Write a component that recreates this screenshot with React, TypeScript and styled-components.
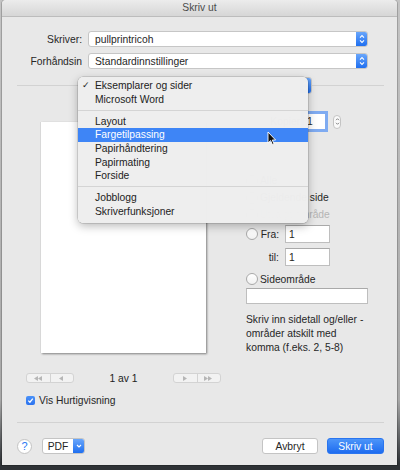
import styled, { createGlobalStyle } from "styled-components";

const GlobalStyle = createGlobalStyle`
  html, body {
    margin: 0;
    padding: 0;
  }
  body {
    width: 400px;
    height: 470px;
    overflow: hidden;
    background: linear-gradient(#c4c4c4, #a8a8a8 85%, #2e3236 98.6%);
    font-family: "Liberation Sans", Arial, sans-serif;
    font-size: 10.3px;
    color: #262626;
  }
`;

const Window = styled.div`
  position: relative;
  margin-left: 2px;
  width: 395px;
  height: 465px;
  background: #e8e8e8;
  border-radius: 4px 4px 0 0;
  box-shadow: 0 0 0 1px rgba(0, 0, 0, 0.18);
  display: flex;
  flex-direction: column;
`;

const TitleBar = styled.div`
  height: 16px;
  line-height: 16px;
  text-align: center;
  color: #4a4a4a;
  background: linear-gradient(#ececec, #d6d6d6);
  border-bottom: 1px solid #bcbcbc;
  border-radius: 4px 4px 0 0;
`;

const Form = styled.div`
  padding-top: 14px;
  display: flex;
  flex-direction: column;
  gap: 6px;
`;

const FieldRow = styled.div`
  display: flex;
  align-items: center;
  gap: 6px;
  height: 16px;
`;

const FieldLabel = styled.span`
  width: 80px;
  text-align: right;
  white-space: nowrap;
`;

const Popup = styled.div<{ $width: number }>`
  box-sizing: border-box;
  width: ${(p) => p.$width}px;
  height: 16px;
  display: flex;
  align-items: center;
  background: #fff;
  border: 1px solid #c6c6c6;
  border-radius: 3px;
  padding-left: 6px;
  overflow: hidden;
  white-space: nowrap;
`;

const PopupArrow = styled.span`
  margin-left: auto;
  width: 11px;
  height: 100%;
  flex: none;
  display: flex;
  align-items: center;
  justify-content: center;
  background: linear-gradient(#69a6fb, #1f6ff0);
`;

const Header = styled.div`
  position: relative;
  margin-top: 8px;
  height: 17px;
  display: flex;
  justify-content: center;

  &::before {
    content: "";
    position: absolute;
    left: 15px;
    right: 13px;
    top: 8px;
    height: 1px;
    background: #d2d2d2;
  }
`;

const HeaderPopup = styled(Popup)`
  position: relative;
  height: 17px;
  margin-left: -2px;
`;

const Main = styled.div`
  display: flex;
  padding-left: 24px;
  gap: 25px;
`;

const LeftColumn = styled.div`
  width: 195px;
  display: flex;
  flex-direction: column;
`;

const Paper = styled.div`
  align-self: center;
  margin-top: 28px;
  width: 165px;
  height: 231px;
  background: #fff;
  box-shadow: -1px 0 0 #d8d8d8, 1px 1px 2px rgba(0, 0, 0, 0.45);
`;

const NavRow = styled.div`
  margin-top: 20px;
  height: 10px;
  display: flex;
  align-items: center;
  justify-content: space-between;
`;

const NavGroup = styled.div`
  box-sizing: border-box;
  width: 48px;
  height: 10px;
  display: flex;
  border: 1px solid #d3d3d3;
  border-radius: 3px;
  background: #f2f2f2;
`;

const NavSegment = styled.span`
  flex: 1;
  display: flex;
  align-items: center;
  justify-content: center;

  & + & {
    border-left: 1px solid #d3d3d3;
  }
`;

const PageCount = styled.span`
  color: #222;
`;

const CheckRow = styled.label`
  margin-top: 13px;
  height: 9px;
  display: flex;
  align-items: center;
  gap: 4px;
`;

const CheckBox = styled.span`
  width: 9px;
  height: 9px;
  border-radius: 2px;
  background: linear-gradient(#4b92f8, #2a72ef);
  display: flex;
  align-items: center;
  justify-content: center;
`;

const RightColumn = styled.div`
  width: 124px;
  display: flex;
  flex-direction: column;
`;

const CopiesRow = styled.div`
  margin-top: 19px;
  height: 17px;
  display: flex;
  align-items: center;
`;

const CopiesLabel = styled.span`
  width: 57px;
  text-align: right;
`;

const TextInput = styled.div<{ $width: number; $height?: number; $focus?: boolean }>`
  box-sizing: border-box;
  width: ${(p) => p.$width}px;
  height: ${(p) => p.$height ?? 18}px;
  background: #fff;
  border: 1px solid #bebebe;
  border-top-color: #a9a9a9;
  padding-left: 3px;
  display: flex;
  align-items: center;
  ${(p) => (p.$focus ? "box-shadow: 0 0 0 2px #7fabf1; border-color: #7fabf1;" : "")}
`;

const Stepper = styled.span`
  margin-left: 7px;
  box-sizing: border-box;
  width: 8px;
  height: 14px;
  border: 1px solid #c4c4c4;
  border-radius: 4px;
  background: #fafafa;
  display: flex;
  align-items: center;
  justify-content: center;
`;

const RadioRow = styled.div<{ $top: number; $height?: number; $dim?: boolean }>`
  margin-top: ${(p) => p.$top}px;
  height: ${(p) => p.$height ?? 17}px;
  display: flex;
  align-items: center;
  white-space: nowrap;
  color: ${(p) => (p.$dim ? "#b5b5b5" : "#262626")};
`;

const Radio = styled.span<{ $blank?: boolean }>`
  box-sizing: border-box;
  width: 12px;
  height: 12px;
  flex: none;
  border-radius: 50%;
  border: 1px solid #a9a9a9;
  background: linear-gradient(#ffffff, #f1f1f1);
  margin-right: 2px;
  visibility: ${(p) => (p.$blank ? "hidden" : "visible")};
`;

const RangeLabel = styled.span`
  width: 19px;
  text-align: right;
  margin-right: 6px;
`;

const PageRangeInput = styled(TextInput)`
  margin-top: 1px;
`;

const HelpText = styled.p`
  margin: 9px 0 0;
  line-height: 14px;
`;

const Divider = styled.div`
  margin: 17px 13px 0 15px;
  height: 1px;
  background: #d2d2d2;
`;

const ButtonRow = styled.div`
  margin: 15px 13px 0 15px;
  height: 16px;
  display: flex;
  align-items: center;
`;

const HelpButton = styled.span`
  box-sizing: border-box;
  width: 15px;
  height: 15px;
  border-radius: 50%;
  background: #fff;
  border: 1px solid #c3c3c3;
  color: #2a78f3;
  font-size: 11px;
  display: flex;
  align-items: center;
  justify-content: center;
`;

const PdfButton = styled.span`
  margin-left: 10px;
  box-sizing: border-box;
  width: 43px;
  height: 16px;
  display: flex;
  border: 1px solid #c4c4c4;
  border-radius: 3px;
  background: #fff;
  overflow: hidden;
`;

const PdfLabel = styled.span`
  flex: 1;
  display: flex;
  align-items: center;
  justify-content: center;
`;

const Button = styled.span<{ $primary?: boolean; $width: number }>`
  box-sizing: border-box;
  width: ${(p) => p.$width}px;
  height: 16px;
  display: flex;
  align-items: center;
  justify-content: center;
  border-radius: 3px;
  border: 1px solid ${(p) => (p.$primary ? "#2a75ef" : "#c4c4c4")};
  background: ${(p) => (p.$primary ? "linear-gradient(#4c95f9, #1e6cf0)" : "#fff")};
  color: ${(p) => (p.$primary ? "#fff" : "#262626")};
`;

const Spacer = styled.span`
  flex: 1;
`;

const Menu = styled.div`
  position: absolute;
  left: 76px;
  top: 77px;
  width: 230px;
  padding: 2.2px 0 4.6px;
  background: rgba(238, 238, 238, 0.99);
  border-radius: 5px;
  box-shadow: 0 0 0 0.5px rgba(0, 0, 0, 0.22), 0 3px 10px rgba(0, 0, 0, 0.28);
`;

const MenuItem = styled.div<{ $active?: boolean }>`
  position: relative;
  height: 13.6px;
  line-height: 13.6px;
  padding-left: 17px;
  background: ${(p) => (p.$active ? "#3e85f6" : "transparent")};
  color: ${(p) => (p.$active ? "#fff" : "#222")};
`;

const Check = styled.span`
  position: absolute;
  left: 4px;
  top: 0;
  font-family: "DejaVu Sans", sans-serif;
  font-size: 9px;
`;

const MenuSeparator = styled.div`
  height: 8.4px;
  display: flex;
  align-items: center;

  &::after {
    content: "";
    flex: 1;
    height: 1px;
    background: #d4d4d4;
  }
`;

const Cursor = styled.svg`
  position: absolute;
  left: 265px;
  top: 131px;
`;

const UpDown = () => (
  <svg width="6" height="10" viewBox="0 0 6 10">
    <path d="M1 3.6 3 1.6 5 3.6M1 6.4 3 8.4 5 6.4" fill="none" stroke="#fff" strokeWidth="1.1" />
  </svg>
);

const SmallUpDown = () => (
  <svg width="5" height="9" viewBox="0 0 5 9">
    <path d="M1 3.2 2.5 1.7 4 3.2M1 5.8 2.5 7.3 4 5.8" fill="none" stroke="#777" strokeWidth="0.9" />
  </svg>
);

const Tri = ({ dir, count }: { dir: "l" | "r"; count: number }) => (
  <svg width={count * 4 + 1} height="5" viewBox={`0 0 ${count * 4 + 1} 5`}>
    {Array.from({ length: count }).map((_, i) => (
      <path
        key={i}
        d={dir === "l" ? `M${i * 4 + 4} 0 L${i * 4} 2.5 L${i * 4 + 4} 5Z` : `M${i * 4} 0 L${i * 4 + 4} 2.5 L${i * 4} 5Z`}
        fill="#b6b6b6"
      />
    ))}
  </svg>
);

const menuGroups = [
  ["Eksemplarer og sider", "Microsoft Word"],
  ["Layout", "Fargetilpassing", "Papirhåndtering", "Papirmating", "Forside"],
  ["Jobblogg", "Skriverfunksjoner"],
];

const App = () => {
  return (
    <>
      <GlobalStyle />
      <Window>
        <TitleBar>Skriv ut</TitleBar>
        <Form>
          <FieldRow>
            <FieldLabel>Skriver:</FieldLabel>
            <Popup $width={280}>
              pullprintricoh
              <PopupArrow>
                <UpDown />
              </PopupArrow>
            </Popup>
          </FieldRow>
          <FieldRow>
            <FieldLabel>Forhåndsin</FieldLabel>
            <Popup $width={280}>
              Standardinnstillinger
              <PopupArrow>
                <UpDown />
              </PopupArrow>
            </Popup>
          </FieldRow>
        </Form>

        <Header>
          <HeaderPopup $width={226}>
            Eksemplarer og sider
            <PopupArrow>
              <UpDown />
            </PopupArrow>
          </HeaderPopup>
        </Header>

        <Main>
          <LeftColumn>
            <Paper />
            <NavRow>
              <NavGroup>
                <NavSegment>
                  <Tri dir="l" count={2} />
                </NavSegment>
                <NavSegment>
                  <Tri dir="l" count={1} />
                </NavSegment>
              </NavGroup>
              <PageCount>1 av 1</PageCount>
              <NavGroup>
                <NavSegment>
                  <Tri dir="r" count={1} />
                </NavSegment>
                <NavSegment>
                  <Tri dir="r" count={2} />
                </NavSegment>
              </NavGroup>
            </NavRow>
            <CheckRow>
              <CheckBox>
                <svg width="7" height="7" viewBox="0 0 7 7">
                  <path d="M1.3 3.6 2.9 5.2 5.8 1.6" fill="none" stroke="#fff" strokeWidth="1.3" />
                </svg>
              </CheckBox>
              Vis Hurtigvisning
            </CheckRow>
          </LeftColumn>

          <RightColumn>
            <CopiesRow>
              <CopiesLabel>Kopier:</CopiesLabel>
              <TextInput $width={23} $height={17} $focus>
                1
              </TextInput>
              <Stepper>
                <SmallUpDown />
              </Stepper>
            </CopiesRow>
            <RadioRow $top={42}>
              <Radio />
              Alle
            </RadioRow>
            <RadioRow $top={0}>
              <Radio />
              Gjeldende side
            </RadioRow>
            <RadioRow $top={0} $dim>
              <Radio />
              Utvalgt område
            </RadioRow>
            <RadioRow $top={2} $height={18}>
              <Radio />
              <RangeLabel>Fra:</RangeLabel>
              <TextInput $width={45}>1</TextInput>
            </RadioRow>
            <RadioRow $top={5} $height={18}>
              <Radio $blank />
              <RangeLabel>til:</RangeLabel>
              <TextInput $width={45}>1</TextInput>
            </RadioRow>
            <RadioRow $top={5} $height={16}>
              <Radio />
              Sideområde
            </RadioRow>
            <PageRangeInput $width={122} $height={16} />
            <HelpText>
              Skriv inn sidetall og/eller -
              <br />
              områder atskilt med
              <br />
              komma (f.eks. 2, 5-8)
            </HelpText>
          </RightColumn>
        </Main>

        <Divider />

        <ButtonRow>
          <HelpButton>?</HelpButton>
          <PdfButton>
            <PdfLabel>PDF</PdfLabel>
            <PopupArrow>
              <svg width="6" height="4" viewBox="0 0 6 4">
                <path d="M1 1 3 3 5 1" fill="none" stroke="#fff" strokeWidth="1.1" />
              </svg>
            </PopupArrow>
          </PdfButton>
          <Spacer />
          <Button $width={56}>Avbryt</Button>
          <Button $width={57} $primary style={{ marginLeft: 9 }}>
            Skriv ut
          </Button>
        </ButtonRow>

        <Menu>
          {menuGroups.map((group, gi) => (
            <div key={gi}>
              {gi > 0 && <MenuSeparator />}
              {group.map((item) => (
                <MenuItem key={item} $active={item === "Fargetilpassing"}>
                  {item === "Eksemplarer og sider" && <Check>✓</Check>}
                  {item}
                </MenuItem>
              ))}
            </div>
          ))}
        </Menu>

        <Cursor width="10" height="15" viewBox="0 0 10 15">
          <path d="M1 1 L1 12 L3.6 9.6 L5.4 13.6 L7 12.9 L5.3 9 L8.6 9 Z" fill="#111" stroke="#fff" strokeWidth="0.9" />
        </Cursor>
      </Window>
    </>
  );
};

export default App;
